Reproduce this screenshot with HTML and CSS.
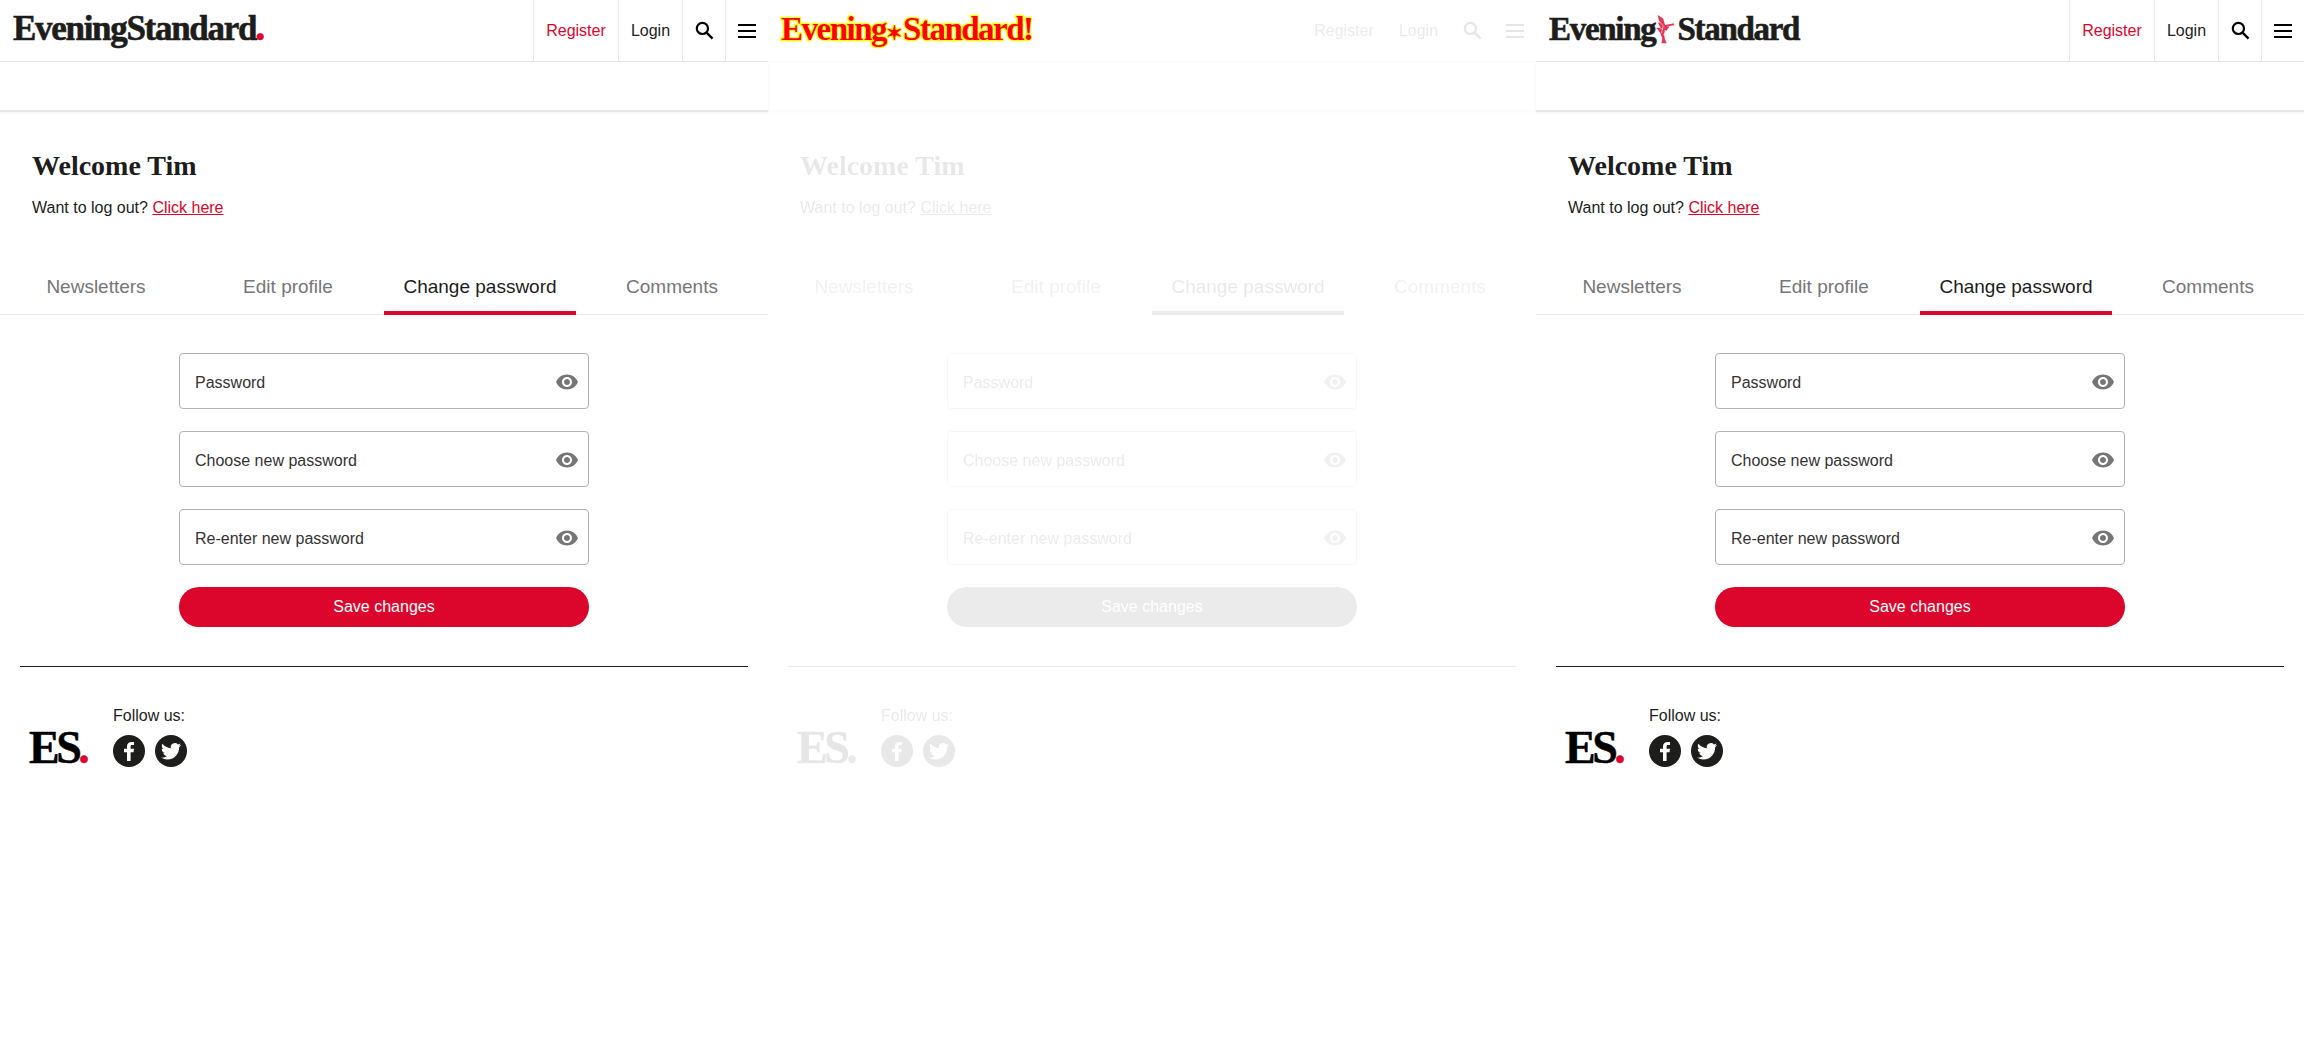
FILE: index.html
```html
<!DOCTYPE html>
<html lang="en">
<head>
  <meta charset="UTF-8" />
  <title>Evening Standard - Change password</title>
  <link rel="stylesheet" href="styles.css">
</head>
<body>
  <!-- Shared icons -->
  <svg class="sprite" aria-hidden="true">
    <symbol id="i-search" viewBox="0 0 20 20">
      <circle cx="7.8" cy="7.8" r="5.9" fill="none" stroke="currentColor" stroke-width="2.3" />
      <path d="M12.2 12.2l6.3 6.3" fill="none" stroke="currentColor" stroke-width="2.4" />
    </symbol>
    <symbol id="i-menu" viewBox="0 0 18 14">
      <path d="M0 0h18v2H0zM0 6h18v2H0zM0 12h18v2H0z" fill="currentColor" />
    </symbol>
    <symbol id="i-eye" viewBox="0 0 24 24">
      <path d="M12 4.5C7 4.5 2.73 7.61 1 12c1.73 4.39 6 7.5 11 7.5s9.27-3.11 11-7.5c-1.73-4.39-6-7.5-11-7.5zM12 17c-2.76 0-5-2.24-5-5s2.24-5 5-5 5 2.24 5 5-2.24 5-5 5zm0-8c-1.66 0-3 1.34-3 3s1.34 3 3 3 3-1.34 3-3-1.34-3-3-3z" fill="currentColor" />
    </symbol>
    <symbol id="i-facebook" viewBox="0 0 32 32">
      <circle cx="16" cy="16" r="16" fill="currentColor" />
      <path d="M17.6 26v-8.7h2.9l.5-3.5h-3.4v-2.1c0-1 .3-1.7 1.7-1.7H21V7c-.3 0-1.4-.1-2.6-.1-2.6 0-4.4 1.6-4.4 4.5v2.4h-3v3.5h3V26z" fill="#fff" />
    </symbol>
    <symbol id="i-twitter" viewBox="0 0 32 32">
      <circle cx="16" cy="16" r="16" fill="currentColor" />
      <path transform="translate(6 6.2) scale(.84)" d="M23.953 4.57a10 10 0 01-2.825.775 4.958 4.958 0 002.163-2.723c-.951.555-2.005.959-3.127 1.184a4.92 4.92 0 00-8.384 4.482C7.69 8.095 4.067 6.13 1.64 3.162a4.822 4.822 0 00-.666 2.475c0 1.71.87 3.213 2.188 4.096a4.904 4.904 0 01-2.228-.616v.06a4.923 4.923 0 003.946 4.827 4.996 4.996 0 01-2.212.085 4.936 4.936 0 004.604 3.417 9.867 9.867 0 01-6.102 2.105c-.39 0-.779-.023-1.17-.067a13.995 13.995 0 007.557 2.209c9.053 0 13.998-7.496 13.998-13.985 0-.21 0-.42-.015-.63A9.935 9.935 0 0024 4.59z" fill="#fff" />
    </symbol>
    <symbol id="i-eros" viewBox="0 0 22 32">
      <path d="M3 0l6 4 2 7 10-2v2l-8 2h3l-4 5-1-2-1 6 1 5 2 4H7l1-5-2-6-3-4-2-2h5L3 8l2 1z" fill="currentColor" fill-opacity=".8" />
      <path d="M9 12l-2 8M9 22l5-5 3 4M4 6l5 6M5 14l4 2" fill="none" stroke="#fff" stroke-width=".6" />
    </symbol>
  </svg>

  <div class="screens">
    <!-- Left: new logo -->
    <section class="screen">
      <header class="site-head">
        <a class="logo">EveningStandard<span class="logo-dot">.</span></a>
        <nav class="site-nav">
          <a class="nav-item nav-register">Register</a>
          <a class="nav-item nav-login">Login</a>
          <a class="nav-item nav-icon"><svg class="icon-search"><use href="#i-search" /></svg></a>
          <a class="nav-item nav-icon"><svg class="icon-menu"><use href="#i-menu" /></svg></a>
        </nav>
      </header>
      <div class="sub-bar"></div>
      <main class="account">
        <h1 class="welcome">Welcome Tim</h1>
        <p class="logout">Want to log out? <a>Click here</a></p>
        <div class="tabs">
          <a class="tab">Newsletters</a>
          <a class="tab">Edit profile</a>
          <a class="tab tab-active">Change password</a>
          <a class="tab">Comments</a>
        </div>
        <form class="password-form">
          <div class="field"><span>Password</span><svg class="icon-eye"><use href="#i-eye" /></svg></div>
          <div class="field"><span>Choose new password</span><svg class="icon-eye"><use href="#i-eye" /></svg></div>
          <div class="field"><span>Re-enter new password</span><svg class="icon-eye"><use href="#i-eye" /></svg></div>
          <div class="save-btn">Save changes</div>
        </form>
        <footer class="site-foot">
          <div class="foot-logo">ES<span class="logo-dot">.</span></div>
          <div class="follow">
            <div class="follow-label">Follow us:</div>
            <div class="follow-icons">
              <svg class="icon-social"><use href="#i-facebook" /></svg>
              <svg class="icon-social"><use href="#i-twitter" /></svg>
            </div>
          </div>
        </footer>
      </main>
    </section>

    <!-- Middle: difference view, only the logo stands out -->
    <section class="screen screen-diff">
      <header class="site-head">
        <a class="logo logo-diff">Evening<span class="logo-spark">✶</span>Standard!</a>
        <nav class="site-nav">
          <a class="nav-item nav-register">Register</a>
          <a class="nav-item nav-login">Login</a>
          <a class="nav-item nav-icon"><svg class="icon-search"><use href="#i-search" /></svg></a>
          <a class="nav-item nav-icon"><svg class="icon-menu"><use href="#i-menu" /></svg></a>
        </nav>
      </header>
      <div class="sub-bar"></div>
      <main class="account">
        <h1 class="welcome">Welcome Tim</h1>
        <p class="logout">Want to log out? <a>Click here</a></p>
        <div class="tabs">
          <a class="tab">Newsletters</a>
          <a class="tab">Edit profile</a>
          <a class="tab tab-active">Change password</a>
          <a class="tab">Comments</a>
        </div>
        <form class="password-form">
          <div class="field"><span>Password</span><svg class="icon-eye"><use href="#i-eye" /></svg></div>
          <div class="field"><span>Choose new password</span><svg class="icon-eye"><use href="#i-eye" /></svg></div>
          <div class="field"><span>Re-enter new password</span><svg class="icon-eye"><use href="#i-eye" /></svg></div>
          <div class="save-btn">Save changes</div>
        </form>
        <footer class="site-foot">
          <div class="foot-logo">ES<span class="logo-dot">.</span></div>
          <div class="follow">
            <div class="follow-label">Follow us:</div>
            <div class="follow-icons">
              <svg class="icon-social"><use href="#i-facebook" /></svg>
              <svg class="icon-social"><use href="#i-twitter" /></svg>
            </div>
          </div>
        </footer>
      </main>
    </section>

    <!-- Right: old logo -->
    <section class="screen">
      <header class="site-head">
        <a class="logo logo-old">Evening<svg class="logo-eros"><use href="#i-eros" /></svg>Standard</a>
        <nav class="site-nav">
          <a class="nav-item nav-register">Register</a>
          <a class="nav-item nav-login">Login</a>
          <a class="nav-item nav-icon"><svg class="icon-search"><use href="#i-search" /></svg></a>
          <a class="nav-item nav-icon"><svg class="icon-menu"><use href="#i-menu" /></svg></a>
        </nav>
      </header>
      <div class="sub-bar"></div>
      <main class="account">
        <h1 class="welcome">Welcome Tim</h1>
        <p class="logout">Want to log out? <a>Click here</a></p>
        <div class="tabs">
          <a class="tab">Newsletters</a>
          <a class="tab">Edit profile</a>
          <a class="tab tab-active">Change password</a>
          <a class="tab">Comments</a>
        </div>
        <form class="password-form">
          <div class="field"><span>Password</span><svg class="icon-eye"><use href="#i-eye" /></svg></div>
          <div class="field"><span>Choose new password</span><svg class="icon-eye"><use href="#i-eye" /></svg></div>
          <div class="field"><span>Re-enter new password</span><svg class="icon-eye"><use href="#i-eye" /></svg></div>
          <div class="save-btn">Save changes</div>
        </form>
        <footer class="site-foot">
          <div class="foot-logo">ES<span class="logo-dot">.</span></div>
          <div class="follow">
            <div class="follow-label">Follow us:</div>
            <div class="follow-icons">
              <svg class="icon-social"><use href="#i-facebook" /></svg>
              <svg class="icon-social"><use href="#i-twitter" /></svg>
            </div>
          </div>
        </footer>
      </main>
    </section>
  </div>
</body>
</html>
```

FILE: styles.css
```css
/* Reset and basics */
* {
  box-sizing: border-box;
}
body {
  margin: 0;
  background: #fff;
  color: #1d1d1b;
  font-family: 'Liberation Sans', Arial, sans-serif;
  font-size: 16px;
  overflow: hidden;
}
.sprite {
  display: none;
}
.screens {
  display: grid;
  grid-template-columns: repeat(3, 768px);
}
.screen {
  min-height: 1038px;
}

/* Header */
.site-head {
  display: flex;
  justify-content: space-between;
  height: 62px;
  border-bottom: 1px solid #e6e6e6;
}
.logo {
  display: flex;
  align-items: baseline;
  height: 61px;
  padding: 7px 0 0 13px;
  font-family: 'Liberation Serif', serif;
  font-weight: 700;
  font-size: 35px;
  line-height: 44px;
  letter-spacing: -1.3px;
  color: #1d1d1b;
  -webkit-text-stroke: 0.6px #1d1d1b;
}
.logo-dot {
  color: #dc052b;
  -webkit-text-stroke: 0.4px #dc052b;
}
.logo .logo-dot {
  margin-left: -1px;
  font-size: 42px;
  line-height: 0;
}
.logo-old {
  font-size: 33px;
}
.logo-eros {
  align-self: flex-start;
  flex: none;
  width: 20px;
  height: 31px;
  margin: 7px 2px 0 0;
  color: #dc052b;
}
.logo-diff {
  font-size: 33px;
  letter-spacing: -1.5px;
  color: #f00;
  -webkit-text-stroke: 2.5px #ff0;
  paint-order: stroke fill;
}
.logo-spark {
  font-size: 20px;
  line-height: 0;
  letter-spacing: 0;
}
.site-nav {
  display: flex;
}
.nav-item {
  display: flex;
  align-items: center;
  justify-content: center;
  height: 61px;
  border-left: 1px solid #e6e6e6;
}
.nav-register {
  width: 85px;
  color: #dc052b;
}
.nav-login {
  width: 64px;
}
.nav-icon {
  width: 43px;
  color: #000;
}
.icon-search {
  width: 19px;
  height: 19px;
}
.icon-menu {
  width: 18px;
  height: 14px;
}
.sub-bar {
  height: 50px;
  border-bottom: 2px solid #e6e6e6;
  box-shadow: 0 1px 3px rgba(0,0,0,0.06);
}

/* Account area */
.welcome {
  margin: 0;
  padding: 38px 32px 0;
  font-family: 'Liberation Serif', serif;
  font-weight: 700;
  font-size: 28px;
  line-height: 32px;
}
.logout {
  margin: 0;
  padding: 14px 32px 0;
  line-height: 24px;
}
.logout a {
  color: #dc052b;
  text-decoration: underline;
}

.tabs {
  display: grid;
  grid-template-columns: repeat(4, 1fr);
  height: 64px;
  margin-top: 31px;
  border-bottom: 1px solid #e6e6e6;
}
.tab {
  display: flex;
  align-items: center;
  justify-content: center;
  padding-top: 9px;
  font-size: 19px;
  color: #767676;
}
.tab-active {
  color: #1d1d1b;
  border-bottom: 4px solid #dc052b;
  margin-bottom: -1px;
  padding-top: 12px;
}

.password-form {
  display: flex;
  flex-direction: column;
  gap: 22px;
  width: 410px;
  margin: 38px auto 0 179px;
}
.field {
  display: flex;
  align-items: center;
  justify-content: space-between;
  height: 56px;
  padding: 3px 9px 0 15px;
  border: 1px solid #b3b3b3;
  border-radius: 4px;
  color: #333;
}
.icon-eye {
  width: 24px;
  height: 24px;
  margin-top: -1px;
  color: #767676;
}
.save-btn {
  display: flex;
  align-items: center;
  justify-content: center;
  height: 40px;
  padding-bottom: 1px;
  border-radius: 20px;
  background: #dc052b;
  color: #fff;
}

/* Footer */
.site-foot {
  display: flex;
  align-items: flex-start;
  gap: 26px;
  margin: 39px 20px 0;
  padding: 39px 9px 0;
  border-top: 1px solid #1d1d1b;
}
.foot-logo {
  width: 58px;
  margin-top: 19px;
  font-family: 'Liberation Serif', serif;
  font-weight: 700;
  font-size: 46px;
  line-height: 46px;
  letter-spacing: -3.5px;
  color: #000;
  -webkit-text-stroke: 0.5px #000;
}
.follow-label {
  line-height: 20px;
}
.follow-icons {
  display: flex;
  gap: 10px;
  margin-top: 9px;
}
.icon-social {
  width: 32px;
  height: 32px;
  color: #1d1d1b;
}

/* Middle screen: everything but the logo is washed out */
.screen-diff .site-nav,
.screen-diff .sub-bar,
.screen-diff .account {
  filter: grayscale(1) opacity(0.1);
}
.screen-diff .site-head {
  border-bottom-color: #fafafa;
}
```
